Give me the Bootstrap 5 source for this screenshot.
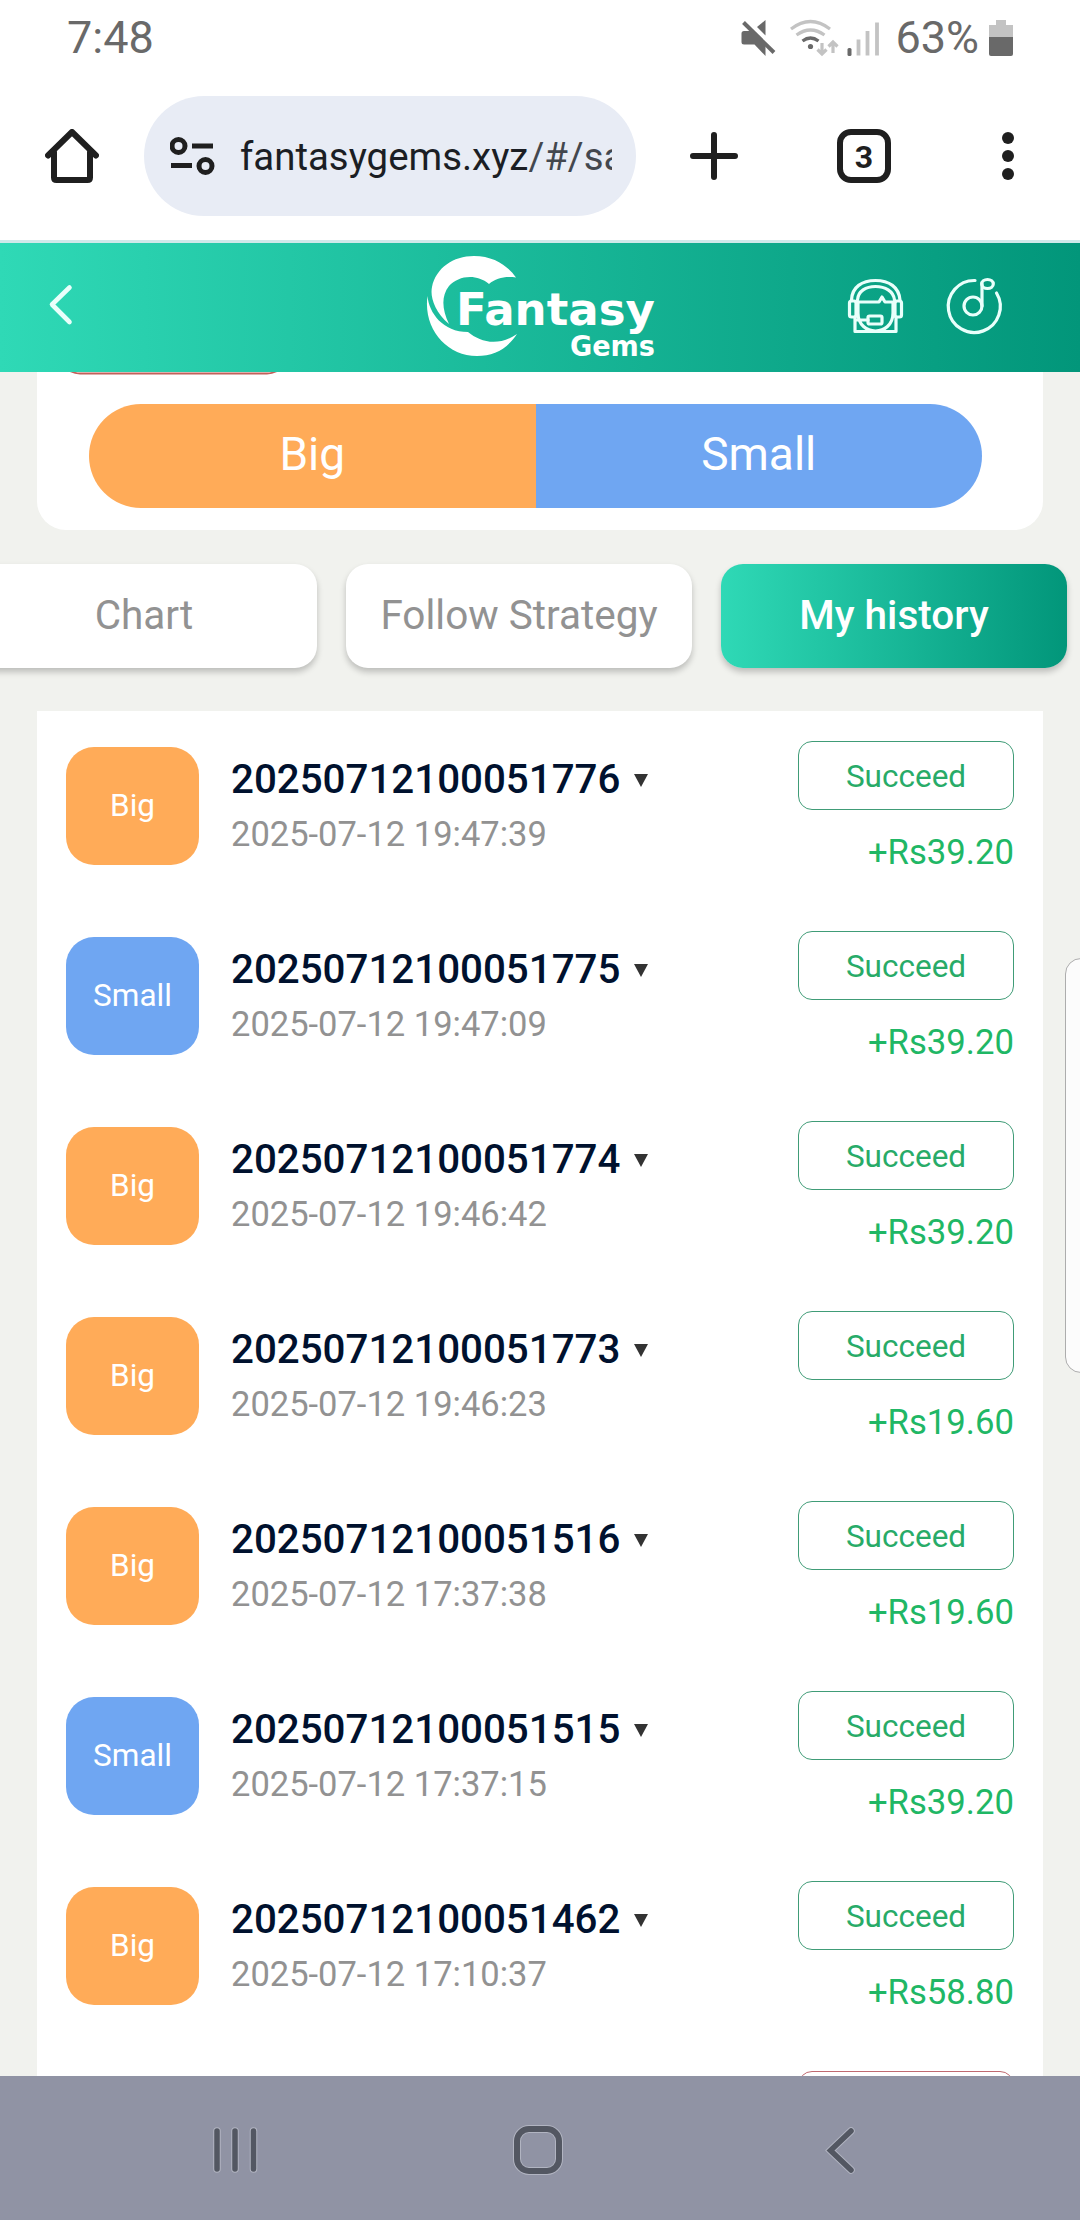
<!DOCTYPE html>
<html lang="en">
<head>
<meta charset="utf-8">
<meta name="viewport" content="width=device-width, initial-scale=1">
<title>Fantasy Gems</title>
<link href="https://cdn.jsdelivr.net/npm/bootstrap@5.3.0/dist/css/bootstrap.min.css" rel="stylesheet">
<style>
  body { width: 1080px; height: 2220px; overflow: hidden; background: #f1f2ee; font-family: Roboto, "Liberation Sans", sans-serif; line-height: 1; }
  svg { display: block; flex: none; }
  .phone { height: 2220px; }
  .status-bar { height: 75px; padding: 0 66px 0 67px; font-size: 45px; color: #696969; }
  .battery { margin-left: 9px; }
  .browser-bar { height: 165px; padding: 21px 0 24px 45px; color: #1f1f1f; }
  .url-pill { width: 492px; height: 120px; margin-left: 45px; padding: 0 24px 0 26px; background: #e8ecf5; font-size: 38.4px; color: #1b1e24; }
  .url-text { width: 372px; margin-left: 25px; line-height: 60px; padding-top: 2px; }
  .url-path { color: #43474e; }
  .app-header { height: 132px; border-top: 3px solid #cfe9ea; background: linear-gradient(90deg, #2fd9b6, #02967a); }
  .app-main { height: 1704px; }
  .bet-card { height: 158px; margin: 0 37px; border-radius: 0 0 29px 29px; padding: 0 52px 0 29px; }
  .balance-outline { width: 218px; height: 3px; }
  .bet-pill { height: 104px; margin: 29px 9px 0 23px; width: 893px; font-size: 46px; line-height: 101px; }
  .fill-big { background: #ffab58; }
  .fill-small { background: #6fa6f2; }
  .tab-strip { gap: 29px; margin: 34px 0 43px -29px; }
  .game-tab { width: 346px; height: 104px; border-radius: 22px; font-size: 40.5px; line-height: 103px; color: #929292; box-shadow: 0 4px 6px rgba(0,0,0,.22); }
  .game-tab.current { color: #fff; font-weight: 500; background: linear-gradient(90deg, #2fd9b6, #02967a); }
  .history { height: 1365px; margin: 0 37px; }
  .bet-row { height: 190px; padding: 30px 29px 0; }
  .bet-kind { width: 133px; height: 118px; margin-top: 6px; border-radius: 28px; font-size: 31.5px; }
  .bet-info { margin-left: 32px; }
  .issue { font-size: 40.3px; font-weight: 500; color: #00112e; line-height: 48px; margin-top: 15px; gap: 14px; }
  .stamp { font-size: 34.5px; color: #929292; line-height: 40px; margin-top: 10px; }
  .outcome { width: 216px; height: 69px; border: 1.5px solid #409c77; border-radius: 14px; font-size: 31.5px; color: #28ab68; padding-top: 2px; }
  .outcome.failed { border-color: #c06a70; }
  .payout { font-size: 34.7px; line-height: 40px; color: #20b765; margin-top: 22px; }
  .edge-handle { top: 958px; left: 1065px; width: 40px; height: 415px; border: 1.5px solid #adadad; border-radius: 16px; background: #fcfcfc; }
  .nav-keys { height: 144px; background: #9093a4; padding: 4px 225px 0 211px; }
  .home-key { margin-left: -8px; }
</style>
</head>
<body>
<div class="phone d-flex flex-column position-relative overflow-hidden">

  <div class="status-bar bg-white d-flex align-items-center justify-content-between">
    <span>7:48</span>
    <div class="d-flex align-items-center">
      <svg width="150" height="40" viewBox="744 16 150 40">
        <g fill="#696969"><path d="M747 29h6.500l15 14.500V54l-11-11.500H747q-2.500 0-2.500-2.500v-8.500q0-2.500 2.500-2.500z"/><path d="M768.500 18v15.500l-8.500-8.500z"/><path d="M746.500 20.500l30.500 30" stroke="#696969" stroke-width="4"/><circle cx="813.500" cy="44.500" r="2.600"/><rect x="850.500" y="46" width="4" height="8" rx="1.500"/></g>
        <g fill="none" stroke="#c3c3c3" stroke-width="3.200"><path d="M794 27q19.500-15 39 0"/><path d="M799.500 33q14-10 28 0"/><path d="M805.500 39q8-6 16 0" stroke="#696969"/><path d="M825 41v11M820.500 47.500l4.500 4.500 4.500-4.500M836 51V40M831.500 44.500l4.500-4.500 4.500 4.500"/><path d="M861.500 37.500v16M870.500 29v24.500M880 20.500v33" stroke-width="3.800"/></g>
      </svg>
      <span class="ms-1">63%</span>
      <svg class="battery" width="26" height="40" viewBox="988 16 26 40"><path d="M996 18h10v5h7v12h-24V23h7z" fill="#c3c3c3"/><path d="M989 35h24v17q0 2-2 2h-20q-2 0-2-2z" fill="#696969"/></svg>
    </div>
  </div>

  <div class="browser-bar bg-white d-flex align-items-center">
    <svg width="54" height="54" viewBox="45 129 54 54" fill="none" stroke="#1f1f1f" stroke-width="6" stroke-linejoin="round" stroke-linecap="round"><path d="M48 155.500l24-23.500 24 23.500M54 152v25.500q0 2.500 2.500 2.500h31q2.500 0 2.500-2.500V152"/></svg>
    <div class="url-pill rounded-pill d-flex align-items-center">
      <svg width="45" height="40" viewBox="170 136 45 40" fill="none" stroke="#1f1f1f" stroke-width="5"><circle cx="178.500" cy="146" r="6.500"/><path d="M192 146h21M171 165.500h21"/><circle cx="205.500" cy="166" r="6.500"/></svg>
      <div class="url-text overflow-hidden text-nowrap">fantasygems.xyz<span class="url-path">/#/sa</span></div>
    </div>
    <svg width="444" height="60" viewBox="636 126 444 60" fill="none" stroke="#1f1f1f" stroke-width="6" stroke-linecap="round">
      <path d="M714 135v42M693 156h42"/><rect x="840" y="132" width="48" height="48" rx="11"/>
      <g fill="#1f1f1f" stroke="none"><circle cx="1008" cy="138" r="6"/><circle cx="1008" cy="156" r="6"/><circle cx="1008" cy="174" r="6"/><text x="864" y="168" font-size="32" font-weight="700" text-anchor="middle">3</text></g>
    </svg>
  </div>

  <header class="app-header d-flex">
    <svg width="1080" height="129" viewBox="0 243 1080 129" fill="none" stroke="#e9fffb" stroke-linecap="round" stroke-linejoin="round">
      <path d="M69.500 287.500L52 304.500l17.500 17.500" stroke-width="4.600"/>
      <g fill="#fff" stroke="none">
        <path d="M449 324C434 311 430 296 432 287C436 268 453 256 474 256C494 256 508 266 516 277.500C505 276 496 278 489 284C476 273 458 276 449 286C441 296 442 310 449 324Z"/>
        <path d="M427.500 296C429 313 443 332 468 332C480 342 498 347 517 334C507 349 494 356 477 356C446 356 423 328 427.500 296Z"/>
        <g font-family="DejaVu Sans, sans-serif" font-weight="700"><text x="456" y="325" font-size="45" textLength="199" lengthAdjust="spacingAndGlyphs">Fantasy</text><text x="570" y="356" font-size="28" textLength="85" lengthAdjust="spacingAndGlyphs">Gems</text></g>
      </g>
      <g stroke-width="3.200">
        <path d="M851.500 300C852 287 862 280.500 875.500 280.500S899 287 900 300M857.500 300C858 291 866 286.500 875.500 286.500S893.500 291 894.500 300"/>
        <rect x="849.500" y="301" width="6.500" height="16" rx="2"/><rect x="895" y="301" width="6.500" height="16" rx="2"/>
        <path d="M857 302h22l3-5 3 5h10M858 302v11c0 12 9 18 17.500 18s17.500-6 17.500-18v-11M855 317v14.500h41V317M855 320h13"/><rect x="868" y="316" width="14" height="8" rx="1.500"/>
        <path d="M975 280.500A26 26 0 1 0 996.500 293"/><circle cx="973" cy="306" r="9"/><path d="M982 306v-22"/><ellipse cx="987.500" cy="284" rx="5.800" ry="4.500"/>
      </g>
    </svg>
  </header>

  <main class="app-main overflow-hidden">
    <section class="bet-card bg-white">
      <svg class="balance-outline" viewBox="66 372 218 3" fill="none"><path d="M70 371q5 2.500 10 2.500h187q5 0 10-2.500" stroke="#c2605b" stroke-width="1.800"/></svg>
      <div class="bet-pill rounded-pill overflow-hidden d-flex text-white text-center">
        <div class="fill-big w-50">Big</div><div class="fill-small w-50">Small</div>
      </div>
    </section>

    <nav class="tab-strip d-flex text-center">
      <div class="game-tab bg-white flex-shrink-0">Chart</div>
      <div class="game-tab bg-white flex-shrink-0">Follow Strategy</div>
      <div class="game-tab current flex-shrink-0">My history</div>
    </nav>

    <section class="history bg-white overflow-hidden">
      <div class="bet-row d-flex">
        <div class="bet-kind fill-big text-white d-flex align-items-center justify-content-center">Big</div>
        <div class="bet-info"><div class="issue d-flex align-items-center">20250712100051776<svg width="14" height="14" viewBox="0 0 14 14"><path d="M0 1h14L7 14z" fill="#333"/></svg></div><div class="stamp">2025-07-12 19:47:39</div></div>
        <div class="ms-auto text-end"><div class="outcome d-flex align-items-center justify-content-center">Succeed</div><div class="payout">+Rs39.20</div></div>
      </div>
      <div class="bet-row d-flex">
        <div class="bet-kind fill-small text-white d-flex align-items-center justify-content-center">Small</div>
        <div class="bet-info"><div class="issue d-flex align-items-center">20250712100051775<svg width="14" height="14" viewBox="0 0 14 14"><path d="M0 1h14L7 14z" fill="#333"/></svg></div><div class="stamp">2025-07-12 19:47:09</div></div>
        <div class="ms-auto text-end"><div class="outcome d-flex align-items-center justify-content-center">Succeed</div><div class="payout">+Rs39.20</div></div>
      </div>
      <div class="bet-row d-flex">
        <div class="bet-kind fill-big text-white d-flex align-items-center justify-content-center">Big</div>
        <div class="bet-info"><div class="issue d-flex align-items-center">20250712100051774<svg width="14" height="14" viewBox="0 0 14 14"><path d="M0 1h14L7 14z" fill="#333"/></svg></div><div class="stamp">2025-07-12 19:46:42</div></div>
        <div class="ms-auto text-end"><div class="outcome d-flex align-items-center justify-content-center">Succeed</div><div class="payout">+Rs39.20</div></div>
      </div>
      <div class="bet-row d-flex">
        <div class="bet-kind fill-big text-white d-flex align-items-center justify-content-center">Big</div>
        <div class="bet-info"><div class="issue d-flex align-items-center">20250712100051773<svg width="14" height="14" viewBox="0 0 14 14"><path d="M0 1h14L7 14z" fill="#333"/></svg></div><div class="stamp">2025-07-12 19:46:23</div></div>
        <div class="ms-auto text-end"><div class="outcome d-flex align-items-center justify-content-center">Succeed</div><div class="payout">+Rs19.60</div></div>
      </div>
      <div class="bet-row d-flex">
        <div class="bet-kind fill-big text-white d-flex align-items-center justify-content-center">Big</div>
        <div class="bet-info"><div class="issue d-flex align-items-center">20250712100051516<svg width="14" height="14" viewBox="0 0 14 14"><path d="M0 1h14L7 14z" fill="#333"/></svg></div><div class="stamp">2025-07-12 17:37:38</div></div>
        <div class="ms-auto text-end"><div class="outcome d-flex align-items-center justify-content-center">Succeed</div><div class="payout">+Rs19.60</div></div>
      </div>
      <div class="bet-row d-flex">
        <div class="bet-kind fill-small text-white d-flex align-items-center justify-content-center">Small</div>
        <div class="bet-info"><div class="issue d-flex align-items-center">20250712100051515<svg width="14" height="14" viewBox="0 0 14 14"><path d="M0 1h14L7 14z" fill="#333"/></svg></div><div class="stamp">2025-07-12 17:37:15</div></div>
        <div class="ms-auto text-end"><div class="outcome d-flex align-items-center justify-content-center">Succeed</div><div class="payout">+Rs39.20</div></div>
      </div>
      <div class="bet-row d-flex">
        <div class="bet-kind fill-big text-white d-flex align-items-center justify-content-center">Big</div>
        <div class="bet-info"><div class="issue d-flex align-items-center">20250712100051462<svg width="14" height="14" viewBox="0 0 14 14"><path d="M0 1h14L7 14z" fill="#333"/></svg></div><div class="stamp">2025-07-12 17:10:37</div></div>
        <div class="ms-auto text-end"><div class="outcome d-flex align-items-center justify-content-center">Succeed</div><div class="payout">+Rs58.80</div></div>
      </div>
      <div class="bet-row d-flex"><div class="outcome failed ms-auto"></div></div>
    </section>
  </main>

  <div class="edge-handle position-absolute"></div>

  <div class="nav-keys d-flex align-items-center justify-content-between">
    <svg width="48" height="52" viewBox="212 2124 48 52" stroke-linecap="round"><g stroke="#b1b4c1" stroke-width="7.500"><path d="M218 2131v38M236 2131v38M254.500 2131v38"/></g><g stroke="#535762" stroke-width="5.500"><path d="M218 2131v38M236 2131v38M254.500 2131v38"/></g></svg>
    <svg class="home-key" width="52" height="52" viewBox="512 2124 52 52" fill="none"><rect x="517" y="2129" width="42" height="42" rx="12" stroke="#b1b4c1" stroke-width="8"/><rect x="517" y="2129" width="42" height="42" rx="12" stroke="#535762" stroke-width="6"/></svg>
    <svg width="30" height="52" viewBox="825 2124 30 52" fill="none" stroke-linecap="round"><path d="M851 2131l-20.500 19.500L851 2170" stroke="#b1b4c1" stroke-width="7.500"/><path d="M851 2131l-20.500 19.500L851 2170" stroke="#535762" stroke-width="5.500"/></svg>
  </div>
</div>
<script src="https://cdn.jsdelivr.net/npm/bootstrap@5.3.0/dist/js/bootstrap.bundle.min.js"></script>
</body>
</html>
